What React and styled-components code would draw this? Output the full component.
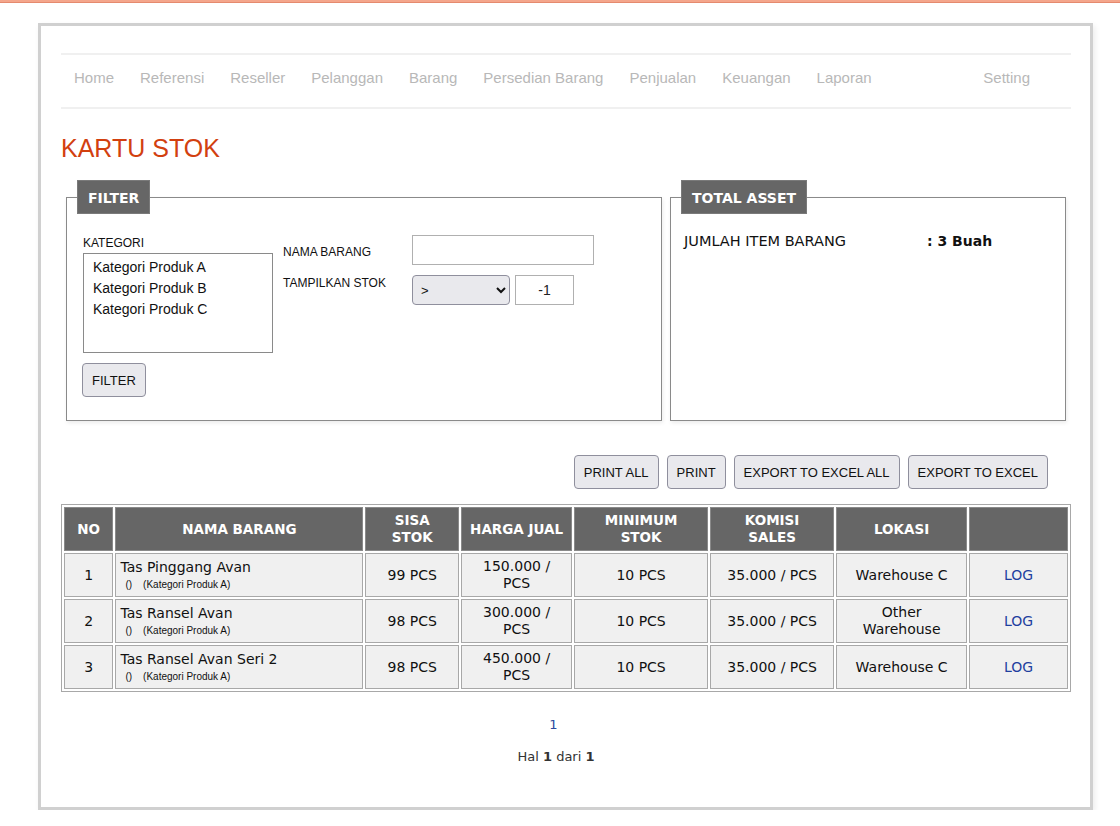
import React from 'react';
import styled, { createGlobalStyle } from 'styled-components';

const GlobalStyle = createGlobalStyle`
  html, body {
    margin: 0;
    padding: 0;
    background: #fff;
  }
  body {
    font-family: 'Liberation Sans', Arial, sans-serif;
    color: #111;
    border-top: 2px solid #f4a68c;
    box-shadow: inset 0 1px 0 #e58a6e;
  }
`;

const navItems = [
  'Home',
  'Referensi',
  'Reseller',
  'Pelanggan',
  'Barang',
  'Persedian Barang',
  'Penjualan',
  'Keuangan',
  'Laporan'
];

const items = [
  {
    no: 1,
    name: 'Tas Pinggang Avan',
    kategori: 'Kategori Produk A',
    sisa: '99 PCS',
    harga: '150.000 /',
    min: '10 PCS',
    komisi: '35.000 / PCS',
    lokasi: 'Warehouse C'
  },
  {
    no: 2,
    name: 'Tas Ransel Avan',
    kategori: 'Kategori Produk A',
    sisa: '98 PCS',
    harga: '300.000 /',
    min: '10 PCS',
    komisi: '35.000 / PCS',
    lokasi: 'Other Warehouse'
  },
  {
    no: 3,
    name: 'Tas Ransel Avan Seri 2',
    kategori: 'Kategori Produk A',
    sisa: '98 PCS',
    harga: '450.000 /',
    min: '10 PCS',
    komisi: '35.000 / PCS',
    lokasi: 'Warehouse C'
  }
];

const App = () => (
  <>
    <GlobalStyle />
    <Page>
      <Nav>
        {navItems.map(n => (
          <NavItem key={n}>{n}</NavItem>
        ))}
        <NavItem $right>Setting</NavItem>
      </Nav>

      <Title>KARTU STOK</Title>

      <PanelRow>
        <Panel $width={596}>
          <Legend>FILTER</Legend>
          <FilterGrid>
            <FieldCol>
              <Label>KATEGORI</Label>
              <ListBox>
                <li>Kategori Produk A</li>
                <li>Kategori Produk B</li>
                <li>Kategori Produk C</li>
              </ListBox>
              <Button>FILTER</Button>
            </FieldCol>
            <FormRows>
              <FormRow>
                <FormLabel $shift={3}>NAMA BARANG</FormLabel>
                <TextInput $width={182} />
              </FormRow>
              <FormRow $top>
                <FormLabel $shift={1}>TAMPILKAN STOK</FormLabel>
                <Select defaultValue=">">
                  <option>&gt;</option>
                  <option>&lt;</option>
                  <option>=</option>
                </Select>
                <TextInput $width={59} $center defaultValue="-1" />
              </FormRow>
            </FormRows>
          </FilterGrid>
        </Panel>

        <Panel $width={396}>
          <Legend>TOTAL ASSET</Legend>
          <AssetRow>
            <span>JUMLAH ITEM BARANG</span>
            <b>: 3 Buah</b>
          </AssetRow>
        </Panel>
      </PanelRow>

      <Actions>
        <Button>PRINT ALL</Button>
        <Button>PRINT</Button>
        <Button>EXPORT TO EXCEL ALL</Button>
        <Button>EXPORT TO EXCEL</Button>
      </Actions>

      <Table>
        <colgroup>
          <col style={{ width: 49 }} />
          <col style={{ width: 246 }} />
          <col style={{ width: 93 }} />
          <col style={{ width: 110 }} />
          <col style={{ width: 133 }} />
          <col style={{ width: 123 }} />
          <col style={{ width: 130 }} />
          <col style={{ width: 98 }} />
        </colgroup>
        <thead>
          <tr>
            <Th>NO</Th>
            <Th>NAMA BARANG</Th>
            <Th>SISA<br />STOK</Th>
            <Th>HARGA JUAL</Th>
            <Th>MINIMUM<br />STOK</Th>
            <Th>KOMISI<br />SALES</Th>
            <Th>LOKASI</Th>
            <Th />
          </tr>
        </thead>
        <tbody>
          {items.map(it => (
            <tr key={it.no}>
              <Td>{it.no}</Td>
              <Td $left>
                {it.name}
                <SubText>
                  ()<Gap />(<span>{it.kategori}</span>)
                </SubText>
              </Td>
              <Td>{it.sisa}</Td>
              <Td>
                {it.harga}
                <br />
                PCS
              </Td>
              <Td>{it.min}</Td>
              <Td>{it.komisi}</Td>
              <Td $narrow>{it.lokasi}</Td>
              <Td>
                <LogLink href="#">LOG</LogLink>
              </Td>
            </tr>
          ))}
        </tbody>
      </Table>

      <Pager>
        <PageLink href="#">1</PageLink>
        <PageInfo>
          Hal <b>1</b> dari <b>1</b>
        </PageInfo>
      </Pager>
    </Page>
  </>
);

export default App;

// Styled Components

const Page = styled.div`
  box-sizing: border-box;
  width: 1055px;
  margin: 21px 0 0 38px;
  padding: 27px 19px 43px 20px;
  border: 3px solid #d0d0d0;
  box-shadow: 2px 3px 6px rgba(0, 0, 0, 0.08);
  background: #fff;
`;

const Nav = styled.div`
  display: flex;
  align-items: flex-start;
  gap: 26px;
  box-sizing: content-box;
  height: 38px;
  padding: 14px 41px 0 13px;
  border-top: 2px solid #f0f0f0;
  border-bottom: 2px solid #f0f0f0;
`;

const NavItem = styled.span`
  font-family: 'Liberation Sans', Arial, sans-serif;
  font-size: 15px;
  line-height: 18px;
  color: #b8b8b8;
  margin-left: ${p => (p.$right ? 'auto' : '0')};
`;

const Title = styled.h1`
  margin: 24px 0 17px;
  font-family: 'Liberation Sans', Arial, sans-serif;
  font-weight: 400;
  font-size: 25px;
  line-height: 30px;
  color: #d2400f;
`;

const PanelRow = styled.div`
  display: flex;
  gap: 8px;
  padding: 0 5px;
`;

const Panel = styled.fieldset`
  box-sizing: border-box;
  width: ${p => p.$width}px;
  height: 241px;
  margin: 0;
  padding: 0 16px;
  border: 1px solid #8a8a8a;
  box-shadow: 1px 2px 4px rgba(0, 0, 0, 0.08);
`;

const Legend = styled.legend`
  margin-left: -6px;
  padding: 0 10px;
  height: 34px;
  line-height: 34px;
  box-sizing: border-box;
  background: #666;
  border: 1px solid #7a7a7a;
  color: #fff;
  font-family: 'DejaVu Sans', Verdana, sans-serif;
  font-weight: 700;
  font-size: 14px;
`;

const FilterGrid = styled.div`
  display: flex;
  gap: 10px;
  padding-top: 22px;
`;

const FieldCol = styled.div`
  display: flex;
  flex-direction: column;
  align-items: flex-start;

  button {
    margin-top: 10px;
    margin-left: -1px;
  }
`;

const Label = styled.div`
  font-size: 12px;
  line-height: 14px;
  margin-bottom: 3px;
`;

const ListBox = styled.ul`
  box-sizing: border-box;
  width: 190px;
  height: 100px;
  margin: 0;
  padding: 3px 9px;
  list-style: none;
  border: 1px solid #8a8a8a;
  font-size: 14px;
  line-height: 21px;
`;

const FormRows = styled.div`
  display: flex;
  flex-direction: column;
  gap: 10px;
  margin-top: -1px;
`;

const FormRow = styled.div`
  display: flex;
  align-items: ${p => (p.$top ? 'flex-start' : 'center')};
  gap: 5px;
`;

const FormLabel = styled.div`
  width: 124px;
  font-size: 12px;
  line-height: 14px;
  margin-top: ${p => p.$shift}px;
`;

const TextInput = styled.input`
  box-sizing: border-box;
  width: ${p => p.$width}px;
  height: 30px;
  padding: 0 6px;
  border: 1px solid #b0b0b0;
  font-family: 'Liberation Sans', Arial, sans-serif;
  font-size: 14px;
  text-align: ${p => (p.$center ? 'center' : 'left')};
  color: #222;
`;

const Select = styled.select`
  box-sizing: border-box;
  width: 98px;
  height: 30px;
  padding: 0 4px;
  border: 1px solid #8f8f9d;
  border-radius: 4px;
  background: #e9e9ed;
  font-family: 'Liberation Sans', Arial, sans-serif;
  font-size: 13px;
  color: #111;
`;

const Button = styled.button`
  box-sizing: border-box;
  height: 34px;
  padding: 0 9px;
  border: 1px solid #8f8f9d;
  border-radius: 4px;
  background: #e9e9ed;
  font-family: 'Liberation Sans', Arial, sans-serif;
  font-size: 13px;
  color: #111;
`;

const AssetRow = styled.div`
  display: grid;
  grid-template-columns: 243px auto;
  padding-top: 18px;
  margin-left: -3px;
  font-family: 'DejaVu Sans', Verdana, sans-serif;
  font-size: 14.5px;
  line-height: 18px;

  b {
    font-weight: 700;
    font-size: 14px;
  }
`;

const Actions = styled.div`
  display: flex;
  justify-content: flex-end;
  gap: 8px;
  margin: 34px 23px 15px 0;
`;

const Table = styled.table`
  width: 1010px;
  table-layout: fixed;
  border: 1px solid #a8a8a8;
  border-spacing: 2px;
  font-family: 'DejaVu Sans', Verdana, sans-serif;
`;

const Th = styled.th`
  box-sizing: border-box;
  height: 44px;
  padding: 0 2px;
  background: #666;
  border: 1px solid #8a8a8a;
  color: #fff;
  font-size: 13.5px;
  line-height: 17px;
  font-weight: 700;
`;

const Td = styled.td`
  box-sizing: border-box;
  height: 44px;
  padding: 0 ${p => (p.$narrow ? '12px' : '4px')};
  background: #f0f0f0;
  border: 1px solid #a8a8a8;
  text-align: ${p => (p.$left ? 'left' : 'center')};
  font-size: 14px;
  line-height: 17px;
  color: #111;
`;

const SubText = styled.div`
  font-family: 'Liberation Sans', Arial, sans-serif;
  font-size: 10px;
  line-height: 14px;
  padding-left: 5px;
  margin-top: 2px;
`;

const Gap = styled.span`
  display: inline-block;
  width: 11px;
`;

const LogLink = styled.a`
  color: #1f3f9f;
  text-decoration: none;
`;

const Pager = styled.div`
  display: flex;
  flex-direction: column;
  align-items: center;
  gap: 17px;
  margin-top: 25px;
  padding-right: 20px;
  font-family: 'DejaVu Sans', Verdana, sans-serif;
  font-size: 13px;
`;

const PageLink = styled.a`
  color: #2a4a9e;
  text-decoration: none;
  margin-right: 5px;
`;

const PageInfo = styled.div`
  color: #333;
`;
